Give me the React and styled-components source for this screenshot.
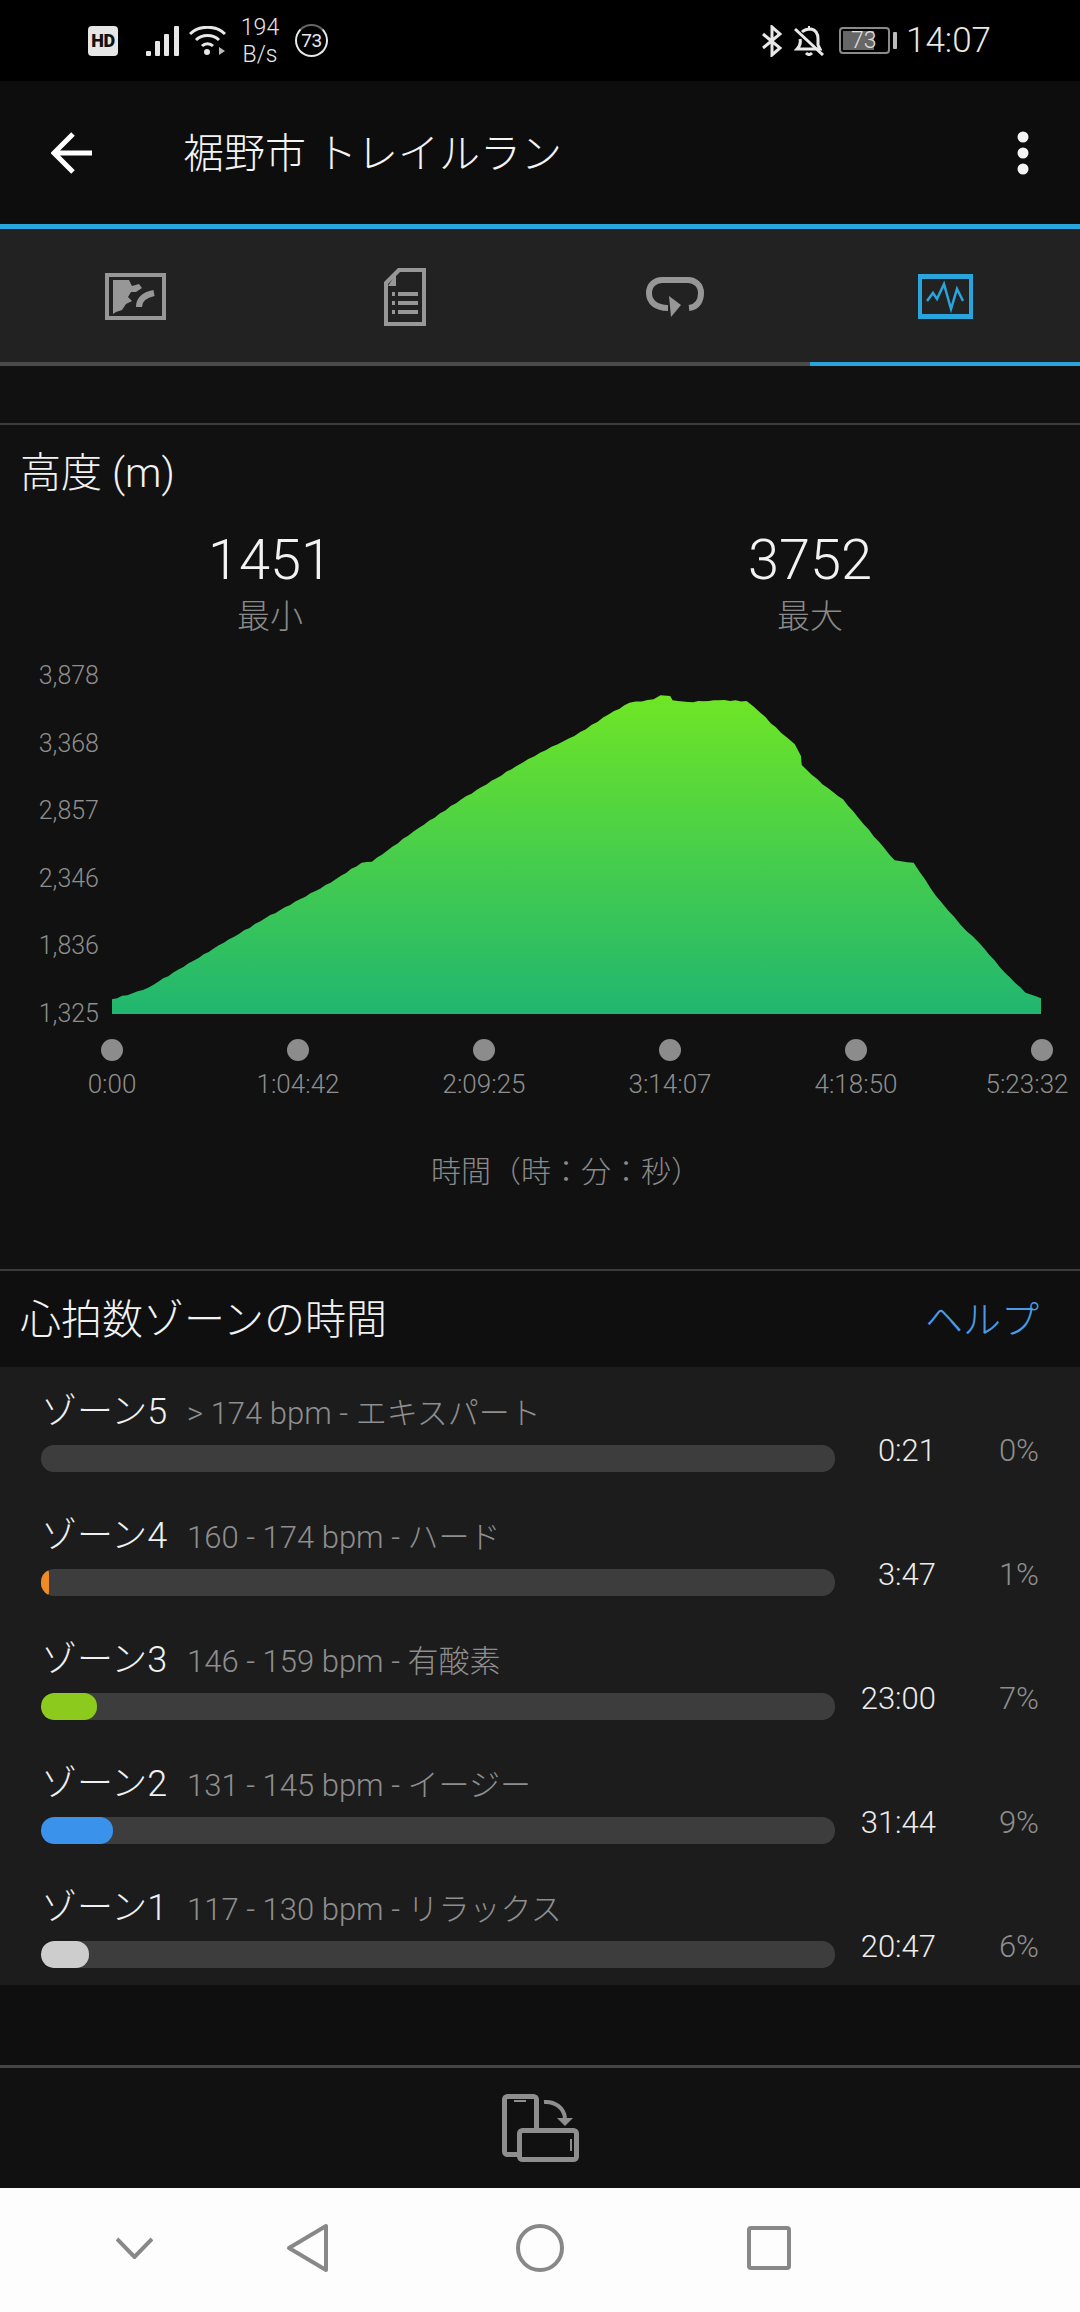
import React from 'react';
import styled, { createGlobalStyle } from 'styled-components';

const GlobalStyle = createGlobalStyle`
  html, body {
    margin: 0;
    padding: 0;
    background: #000;
    font-family: Roboto, "Noto Sans CJK JP", sans-serif;
  }
  * { box-sizing: border-box; }
`;

const Page = styled.div`
  width: 1080px;
  height: 2312px;
  display: flex;
  flex-direction: column;
  overflow: hidden;
  background: #111;
`;

/* status bar */
const StatusBar = styled.div`
  height: 81px;
  flex: none;
  background: #000;
  display: flex;
  align-items: center;
  padding: 0 89px 0 88px;
  color: #e8e8e8;
`;

const HdBadge = styled.span`
  width: 30px;
  height: 30px;
  border-radius: 4px;
  background: #e6e6e6;
  color: #111;
  font-size: 18px;
  font-weight: 900;
  letter-spacing: -0.5px;
  display: flex;
  align-items: center;
  justify-content: center;
`;

const StatusIcon = styled.svg`
  flex: none;
  margin-left: ${props => props.$left || 0}px;
`;

const Speed = styled.div`
  margin-left: 13px;
  width: 42px;
  font-size: 23px;
  line-height: 27px;
  padding-top: 1px;
  text-align: center;
  font-weight: 300;
`;

const CircleBadge = styled.div`
  margin-left: 14px;
  width: 33px;
  height: 33px;
  display: grid;
  place-items: center;
  font-size: 19px;
  border: 2px solid #e8e8e8;
  border-top-color: #666;
  border-radius: 50%;
  letter-spacing: -0.5px;
`;

const StatusSpacer = styled.div`
  flex: 1;
`;

const Battery = styled.div`
  margin-left: 15px;
  width: 51px;
  height: 27px;
  padding: 2px;
  border: 2px solid #8a8a8a;
  border-radius: 4px;
  display: flex;
`;

const BatteryFill = styled.div`
  height: 100%;
  background: #666;
  font-size: 23px;
  line-height: 20px;
  font-weight: 300;
  color: #e0e0e0;
  white-space: nowrap;
  padding-left: 8px;
`;

const BatteryNib = styled.div`
  width: 4px;
  height: 17px;
  margin-left: 3px;
  background: #bbb;
  border-radius: 1px;
`;

const Clock = styled.div`
  margin-left: 9px;
  font-size: 35px;
  font-weight: 300;
  color: #e8e8e8;
`;

/* app bar */
const AppBar = styled.div`
  height: 143px;
  flex: none;
  background: #0d0d0d;
  display: flex;
  align-items: center;
  padding: 0 51px;
`;

const Title = styled.div`
  flex: 1;
  margin-left: 90px;
  padding-bottom: 5px;
  font-size: 41px;
  font-weight: 300;
  color: #f4f4f4;
`;

const AccentLine = styled.div`
  height: 5px;
  flex: none;
  background: #2aa5dc;
`;

/* tabs */
const TabBar = styled.div`
  flex: none;
  display: grid;
  grid-template-columns: repeat(4, 270px);
  background: #222;
`;

const Tab = styled.div`
  height: 137px;
  display: flex;
  align-items: center;
  justify-content: center;
  padding-top: 2px;
  border-bottom: 4px solid ${props => (props.$active ? '#2aa5dc' : '#4a4a4a')};
`;

const TabGap = styled.div`
  height: 57px;
  flex: none;
`;

/* elevation */
const ChartSection = styled.section`
  height: 846px;
  flex: none;
  background: #111;
  border-top: 2px solid #3c3c3c;
`;

const SectionTitle = styled.div`
  height: 94px;
  padding: 0 0 6px 20px;
  display: flex;
  align-items: center;
  font-size: 41px;
  font-weight: 300;
  color: #f2f2f2;
`;

const StatRow = styled.div`
  display: grid;
  grid-template-columns: 1fr 1fr;
  padding-top: 9px;
`;

const Stat = styled.div`
  display: flex;
  flex-direction: column;
  align-items: center;
`;

const StatValue = styled.div`
  font-size: 56px;
  line-height: 64px;
  font-weight: 300;
  color: #f2f2f2;
`;

const StatLabel = styled.div`
  margin-top: 5px;
  font-size: 33px;
  line-height: 40px;
  font-weight: 300;
  color: #8a8a8a;
`;

const ChartRow = styled.div`
  margin-top: 24px;
  height: 368px;
  display: flex;
`;

const YAxis = styled.div`
  width: 99px;
  display: flex;
  flex-direction: column;
  justify-content: space-between;
  align-items: flex-end;
  margin-right: 13px;
  font-size: 25px;
  line-height: 30px;
  font-weight: 300;
  color: #8e8e8e;
`;

const XAxis = styled.div`
  margin-top: 10px;
  padding-left: 19px;
  display: grid;
  grid-template-columns: repeat(6, 186px);
`;

const Tick = styled.div`
  display: flex;
  flex-direction: column;
  align-items: center;
`;

const TickDot = styled.div`
  width: 22px;
  height: 22px;
  border-radius: 50%;
  background: #8c8c8c;
`;

const TickLabel = styled.div`
  margin-top: 8px;
  margin-right: ${props => props.$nudge || 0}px;
  font-size: 26px;
  line-height: 30px;
  font-weight: 300;
  color: #8e8e8e;
  white-space: nowrap;
`;

const AxisTitle = styled.div`
  margin-top: 51px;
  padding-left: 52px;
  text-align: center;
  font-size: 30px;
  line-height: 44px;
  font-weight: 300;
  color: #8a8a8a;
`;

/* heart rate zones */
const ZoneHeader = styled.div`
  height: 98px;
  flex: none;
  background: #0f0f0f;
  border-top: 2px solid #3c3c3c;
  display: flex;
  align-items: center;
  justify-content: space-between;
  padding: 0 41px 6px 20px;
`;

const ZoneTitle = styled.div`
  font-size: 41px;
  font-weight: 300;
  color: #f2f2f2;
`;

const HelpLink = styled.div`
  font-size: 38px;
  font-weight: 300;
  color: #4a9be4;
`;

const ZoneList = styled.div`
  height: 618px;
  flex: none;
  overflow: hidden;
  background: #1c1c1c;
`;

const ZoneRow = styled.div`
  height: 124px;
  padding: 18px 41px 0 41px;
  display: grid;
  grid-template-columns: 794px 101px 103px;
  grid-template-rows: 60px 27px;
  align-items: center;
`;

const ZoneLabel = styled.div`
  grid-column: 1 / -1;
  display: flex;
  align-items: baseline;
  padding-bottom: 14px;
`;

const ZoneName = styled.span`
  width: 146px;
  font-size: 36px;
  font-weight: 300;
  color: #f0f0f0;
`;

const ZoneRange = styled.span`
  font-size: 31px;
  font-weight: 300;
  color: #8e8e8e;
`;

const Track = styled.div`
  height: 27px;
  border-radius: 13px;
  background: #3d3d3d;
  overflow: hidden;
`;

const TrackFill = styled.div`
  height: 100%;
  background: ${props => props.$color};
  border-radius: 13px;
`;

const ZoneTime = styled.div`
  text-align: right;
  padding-bottom: 15px;
  font-size: 31px;
  line-height: 30px;
  font-weight: 300;
  color: #ececec;
`;

const ZonePercent = styled(ZoneTime)`
  color: #8e8e8e;
`;

const FooterGap = styled.div`
  height: 80px;
  flex: none;
  background: #0f0f0f;
`;

const Toolbar = styled.div`
  height: 123px;
  flex: none;
  background: #111;
  border-top: 3px solid #444;
  display: flex;
  align-items: center;
  justify-content: center;
`;

const NavBar = styled.div`
  flex: 1;
  background: #fdfdfd;
  display: flex;
  align-items: center;
  padding: 0 0 4px 116px;
`;

const NavIcon = styled.svg`
  flex: none;
  margin-left: ${props => props.$left || 0}px;
`;

const Y_LABELS = ['3,878', '3,368', '2,857', '2,346', '1,836', '1,325'];

const X_TICKS = ['0:00', '1:04:42', '2:09:25', '3:14:07', '4:18:50', '5:23:32'];

const ZONES = [
  { name: 'ゾーン5', range: '> 174 bpm - エキスパート', time: '0:21', pct: '0%', width: 0, color: '#e33' },
  { name: 'ゾーン4', range: '160 - 174 bpm - ハード', time: '3:47', pct: '1%', width: 8, color: '#f08a24' },
  { name: 'ゾーン3', range: '146 - 159 bpm - 有酸素', time: '23:00', pct: '7%', width: 56, color: '#8ccb1e' },
  { name: 'ゾーン2', range: '131 - 145 bpm - イージー', time: '31:44', pct: '9%', width: 72, color: '#3a92ea' },
  { name: 'ゾーン1', range: '117 - 130 bpm - リラックス', time: '20:47', pct: '6%', width: 48, color: '#cdcdcd' },
];

// profile traced off the reference, px in the chart's own box
const RISE = [
  [325, 1075], [385, 1057], [430, 1040], [650, 905], [770, 832], [960, 725],
  [1050, 665], [1080, 662], [1200, 572], [1340, 475], [1500, 375],
].map(([x, y]) => [x / 2.904 - 112, y / 3 - 20]);

const FALL = [
  [0, 335], [100, 285], [200, 220], [260, 185], [330, 175], [350, 163], [378, 165], [385, 178], [430, 183],
  [520, 178], [600, 180], [640, 215], [700, 275], [740, 310], [758, 345], [760, 372], [820, 430], [880, 475],
  [940, 550], [1030, 658], [1085, 665], [1150, 765], [1220, 850], [1275, 905], [1350, 995], [1410, 1055], [1455, 1072],
].map(([x, y]) => [428 + x / 2.904, y / 3 - 20]);

const buildProfile = () => {
  const points = [...RISE, ...FALL];
  const out = [];
  points.forEach(([x, y], i) => {
    const next = points[i + 1];
    out.push([x, y]);
    if (!next) return;
    const steps = Math.floor((next[0] - x) / 5);
    for (let s = 1; s < steps; s++) {
      const t = s / steps;
      const px = x + (next[0] - x) * t;
      out.push([px, y + (next[1] - y) * t + Math.sin(px * 1.7) * 0.5]);
    }
  });
  const line = out.map(([x, y]) => `${x.toFixed(1)} ${y.toFixed(1)}`).join(' L');
  return `M0 353 L${line} L929 353 Z`;
};

const PROFILE = buildProfile();

const BackIcon = () => (
  <svg width="42" height="42" viewBox="0 0 42 42" fill="none" stroke="#fff" strokeWidth="5">
    <path d="M41 21 H4 M22 2 L3 21 L22 40" />
  </svg>
);

const MoreIcon = () => (
  <svg width="12" height="44" viewBox="0 0 12 44" fill="#f4f4f4">
    <circle cx="6" cy="6" r="5.5" />
    <circle cx="6" cy="22" r="5.5" />
    <circle cx="6" cy="38" r="5.5" />
  </svg>
);

const GRAY = '#979797';
const BLUE = '#2aa5dc';

const MapTabIcon = () => (
  <svg width="61" height="47" viewBox="0 0 61 47">
    <rect x="2" y="2" width="57" height="43" fill="none" stroke={GRAY} strokeWidth="4" />
    <path
      d="M8 7 H24 L27 13 L34 11 L37 15 L31 19 L26 19 L23 24 L27 28 L21 31 L17 37 L11 39 L8 41 Z"
      fill={GRAY}
    />
    <path d="M34 34 C34 27 39 22 49 20" fill="none" stroke={GRAY} strokeWidth="6" />
  </svg>
);

const DetailTabIcon = () => (
  <svg width="42" height="58" viewBox="0 0 42 58">
    <path
      fillRule="evenodd"
      d="M14 0 H42 V58 H0 V14 Z M16 4 L4 16 V54 H38 V4 Z"
      fill={GRAY}
    />
    <path d="M12 6 V18 H4 Z" fill={GRAY} />
    <g fill={GRAY}>
      <rect x="8" y="24" width="3" height="4" />
      <rect x="14" y="24" width="20" height="4" />
      <rect x="8" y="33" width="3" height="4" />
      <rect x="14" y="33" width="20" height="4" />
      <rect x="8" y="42" width="3" height="4" />
      <rect x="14" y="42" width="20" height="4" />
    </g>
  </svg>
);

const LapTabIcon = () => (
  <svg width="58" height="40" viewBox="0 0 58 40">
    <path
      d="M43 31 C52 30 55 23 55 16 C55 8 49 3 42 3 H16 C9 3 3 8 3 16 C3 25 10 31 22 31"
      fill="none"
      stroke={GRAY}
      strokeWidth="6"
    />
    <path d="M23 19 L35 28 L25 40 Z" fill={GRAY} />
  </svg>
);

const ChartTabIcon = () => (
  <svg width="55" height="45" viewBox="0 0 55 45">
    <rect x="2" y="3" width="51" height="40" fill="none" stroke={BLUE} strokeWidth="4" />
    <rect x="0" y="0" width="55" height="5" fill={BLUE} />
    <rect x="0" y="40" width="55" height="5" fill={BLUE} />
    <path
      d="M9 27 L15 19 L19 25 L26 10 L33 35 L39 15 L45 27"
      fill="none"
      stroke={BLUE}
      strokeWidth="2.5"
    />
  </svg>
);

const RotateIcon = () => (
  <svg width="77" height="68" viewBox="0 0 77 68" fill="none" stroke="#8e8e8e" strokeWidth="5">
    <rect x="2.5" y="2.5" width="32" height="58" rx="3" />
    <path d="M12 7 H24" strokeWidth="2" />
    <path d="M42 8 C53 7 62 14 63 24" strokeWidth="4" />
    <path d="M55 24 H71 L63 32 Z" fill="#8e8e8e" stroke="none" />
    <rect x="17.5" y="36.5" width="57" height="29" rx="3" fill="#111" />
    <path d="M69 45 V57" strokeWidth="2" />
  </svg>
);

const App = () => (
  <Page>
    <GlobalStyle />
    <StatusBar>
      <HdBadge>HD</HdBadge>
      <StatusIcon $left={28} width="34" height="30" viewBox="0 0 34 30" fill="#e8e8e8">
        <rect x="0" y="25" width="5" height="5" rx="1" />
        <rect x="9" y="15" width="5" height="15" rx="1" />
        <rect x="18" y="8" width="5" height="22" rx="1" />
        <rect x="28" y="0" width="5" height="30" rx="1" />
      </StatusIcon>
      <StatusIcon $left={9} width="37" height="30" viewBox="0 0 37 30" fill="none" stroke="#e8e8e8" strokeWidth="3">
        <path d="M1 8 C10 -1 27 -1 36 8" />
        <path d="M7 14 C13 8 24 8 30 14" />
        <path d="M13 20 C16 17 21 17 24 20" />
        <circle cx="18" cy="26" r="3" fill="#e8e8e8" stroke="none" />
        <path d="M30 21 V29 L36 25 Z" fill="#bbb" stroke="none" />
      </StatusIcon>
      <Speed>194<br />B/s</Speed>
      <CircleBadge>73</CircleBadge>
      <StatusSpacer />
      <StatusIcon width="20" height="32" viewBox="0 0 20 32" fill="none" stroke="#e8e8e8" strokeWidth="3">
        <path d="M1 9 L18 23 L10 30 V2 L18 9 L1 23" />
      </StatusIcon>
      <StatusIcon $left={12} width="30" height="30" viewBox="0 0 30 30" fill="none" stroke="#e8e8e8" strokeWidth="3">
        <path d="M8 6 C11 3 15 3 17 3 C22 4 24 8 24 13 V19 L26 23 H3 C6 20 7 17 6 13" />
        <path d="M14 1 H16 M12 27 C14 29 16 29 18 27" />
        <path d="M1 3 L29 29" />
      </StatusIcon>
      <Battery>
        <BatteryFill style={{ width: '73%' }}>73</BatteryFill>
      </Battery>
      <BatteryNib />
      <Clock>14:07</Clock>
    </StatusBar>

    <AppBar>
      <BackIcon />
      <Title>裾野市 トレイルラン</Title>
      <MoreIcon />
    </AppBar>
    <AccentLine />

    <TabBar>
      <Tab><MapTabIcon /></Tab>
      <Tab><DetailTabIcon /></Tab>
      <Tab><LapTabIcon /></Tab>
      <Tab $active><ChartTabIcon /></Tab>
    </TabBar>
    <TabGap />

    <ChartSection>
      <SectionTitle>高度 (m)</SectionTitle>
      <StatRow>
        <Stat>
          <StatValue>1451</StatValue>
          <StatLabel>最小</StatLabel>
        </Stat>
        <Stat>
          <StatValue>3752</StatValue>
          <StatLabel>最大</StatLabel>
        </Stat>
      </StatRow>
      <ChartRow>
        <YAxis>
          {Y_LABELS.map(label => <span key={label}>{label}</span>)}
        </YAxis>
        <svg width="968" height="368" viewBox="0 0 968 368">
          <defs>
            <linearGradient id="elevation" x1="0" y1="34" x2="0" y2="353" gradientUnits="userSpaceOnUse">
              <stop offset="0" stopColor="#6fe625" />
              <stop offset="1" stopColor="#20b670" />
            </linearGradient>
          </defs>
          <path d={PROFILE} fill="url(#elevation)" />
        </svg>
      </ChartRow>
      <XAxis>
        {X_TICKS.map((label, i) => (
          <Tick key={label}>
            <TickDot />
            <TickLabel $nudge={i === 5 ? 30 : 0}>{label}</TickLabel>
          </Tick>
        ))}
      </XAxis>
      <AxisTitle>時間（時：分：秒）</AxisTitle>
    </ChartSection>

    <ZoneHeader>
      <ZoneTitle>心拍数ゾーンの時間</ZoneTitle>
      <HelpLink>ヘルプ</HelpLink>
    </ZoneHeader>
    <ZoneList>
      {ZONES.map(zone => (
        <ZoneRow key={zone.name}>
          <ZoneLabel>
            <ZoneName>{zone.name}</ZoneName>
            <ZoneRange>{zone.range}</ZoneRange>
          </ZoneLabel>
          <Track>
            <TrackFill $color={zone.color} style={{ width: zone.width }} />
          </Track>
          <ZoneTime>{zone.time}</ZoneTime>
          <ZonePercent>{zone.pct}</ZonePercent>
        </ZoneRow>
      ))}
    </ZoneList>
    <FooterGap />
    <Toolbar><RotateIcon /></Toolbar>

    <NavBar>
      <NavIcon width="37" height="22" viewBox="0 0 37 22" fill="none" stroke="#888" strokeWidth="4">
        <path d="M1 2 L18.5 20 L36 2" />
      </NavIcon>
      <NavIcon $left={133} width="43" height="50" viewBox="0 0 43 50" fill="none" stroke="#888" strokeWidth="4" strokeLinejoin="round">
        <path d="M40 3 V47 L3 25 Z" />
      </NavIcon>
      <NavIcon $left={187} width="48" height="48" viewBox="0 0 48 48" fill="none" stroke="#888" strokeWidth="4">
        <circle cx="24" cy="24" r="22" />
      </NavIcon>
      <NavIcon $left={183} width="44" height="44" viewBox="0 0 44 44" fill="none" stroke="#888" strokeWidth="4">
        <rect x="2" y="2" width="40" height="40" rx="2" />
      </NavIcon>
    </NavBar>
  </Page>
);

export default App;
